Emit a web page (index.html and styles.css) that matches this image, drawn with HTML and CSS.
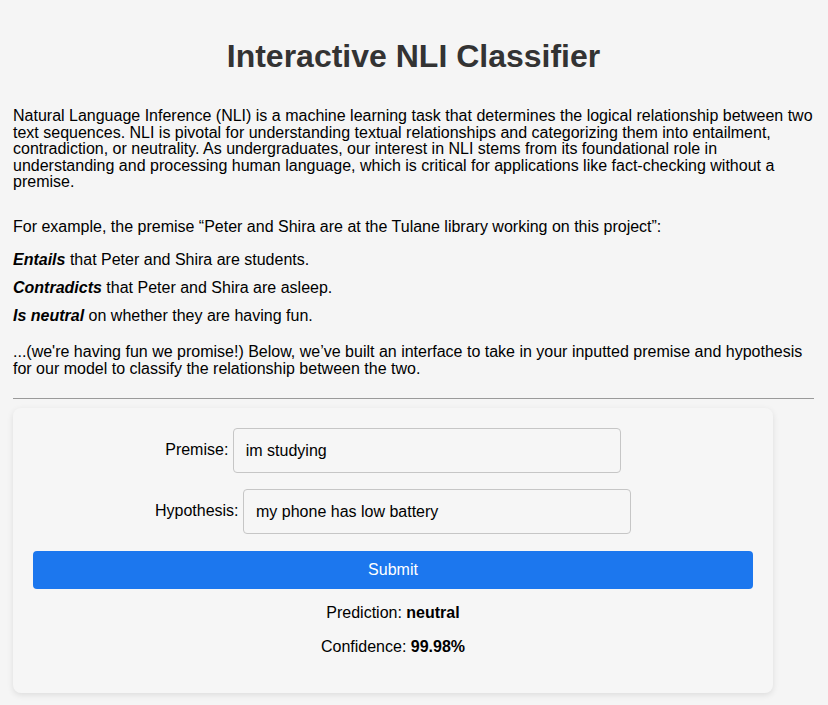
FILE: index.html
```html
<!DOCTYPE html>
<html lang="en">
<head>
<meta charset="utf-8">
<title>Interactive NLI Classifier</title>
<link rel="stylesheet" href="styles.css">
</head>
<body>
<div class="page">
  <h1 class="title">Interactive NLI Classifier</h1>
  <p class="intro">Natural Language Inference (NLI) is a machine learning task that determines the logical relationship between two text sequences. NLI is pivotal for understanding textual relationships and categorizing them into entailment, contradiction, or neutrality. As undergraduates, our interest in NLI stems from its foundational role in understanding and processing human language, which is critical for applications like fact-checking without a premise.</p>
  <p class="example">For example, the premise “Peter and Shira are at the Tulane library working on this project”:</p>
  <p class="case case-first"><em>Entails</em> that Peter and Shira are students.</p>
  <p class="case"><em>Contradicts</em> that Peter and Shira are asleep.</p>
  <p class="case"><em>Is neutral</em> on whether they are having fun.</p>
  <p class="outro">...(we're having fun we promise!) Below, we’ve built an interface to take in your inputted premise and hypothesis for our model to classify the relationship between the two.</p>
  <hr class="rule">
  <form class="card">
    <div class="row"><label for="premise">Premise:</label> <input id="premise" class="field" type="text" value="im studying"></div>
    <div class="row"><label for="hypothesis">Hypothesis:</label> <input id="hypothesis" class="field" type="text" value="my phone has low battery"></div>
    <button class="submit" type="button">Submit</button>
    <p class="result">Prediction: <strong>neutral</strong></p>
    <p class="result">Confidence: <strong>99.98%</strong></p>
  </form>
</div>
</body>
</html>
```
FILE: styles.css
```css
html, body {
  margin: 0;
  padding: 0;
  background: #f5f5f5;
}

body {
  font-family: "Liberation Sans", Arial, Helvetica, sans-serif;
  font-size: 16px;
  color: #000;
}

.page {
  padding: 0 14px 20px 13px;
}

.title {
  margin: 38px 0 0;
  font-size: 32px;
  line-height: 37px;
  font-weight: bold;
  color: #333;
  text-align: center;
}

.intro,
.example,
.case,
.outro {
  line-height: 16.6px;
  margin: 0;
}

.intro {
  margin-top: 33px;
}

.example {
  margin-top: 28px;
}

.case {
  margin-top: 11.4px;
}

.case-first {
  margin-top: 16.4px;
}

.case em {
  font-weight: bold;
  font-style: italic;
}

.outro {
  margin-top: 19.4px;
}

.rule {
  margin: 20.5px 0 0;
  border: 0;
  border-top: 1px solid #9a9a9a;
  height: 0;
}

.card {
  margin-top: 9.5px;
  width: 760px;
  box-sizing: border-box;
  padding: 20px 20px 20px;
  background: #f6f6f6;
  border-radius: 8px;
  box-shadow: 0 2px 6px rgba(0, 0, 0, 0.1);
  text-align: center;
}

.row {
  margin-bottom: 16px;
  line-height: 18px;
}

.row label {
  color: #000;
}

.field {
  box-sizing: border-box;
  width: 388px;
  height: 45px;
  padding: 0 12px;
  border: 1px solid #c6c6c6;
  border-radius: 4px;
  background: #f6f6f6;
  font-family: "Liberation Sans", Arial, Helvetica, sans-serif;
  font-size: 16px;
  color: #000;
  vertical-align: middle;
}

.submit {
  display: block;
  width: 100%;
  height: 38px;
  margin-top: 17px;
  border: 0;
  border-radius: 4px;
  background: #1c77ee;
  color: #fff;
  font-family: "Liberation Sans", Arial, Helvetica, sans-serif;
  font-size: 16px;
}

.result {
  margin: 15px 0 0;
}

.result + .result {
  margin-top: 16px;
}

.result:last-child {
  margin-bottom: 17px;
}
```
